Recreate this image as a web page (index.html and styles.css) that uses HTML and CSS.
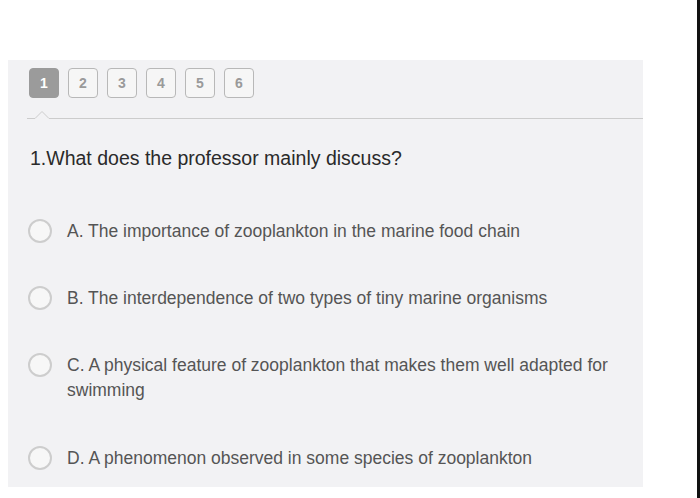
FILE: index.html
```html
<!DOCTYPE html>
<html>
<head>
<meta charset="utf-8">
<link rel="stylesheet" href="styles.css">
</head>
<body>
<div class="screen">
  <div class="main">
    <div class="panel">
      <div class="tabs">
        <span class="tab active">1</span>
        <span class="tab">2</span>
        <span class="tab">3</span>
        <span class="tab">4</span>
        <span class="tab">5</span>
        <span class="tab">6</span>
      </div>
      <div class="divider">
        <svg class="caret" width="26" height="10" viewBox="0 0 26 10"><path d="M0 9.5 H8 L15 2.5 L22 9.5 H26" fill="none" stroke="#cccccc" stroke-width="1"/></svg>
        <div class="line"></div>
      </div>
      <div class="question">1.What does the professor mainly discuss?</div>
      <ul class="options">
        <li class="option"><span class="radio"></span><span class="label">A. The importance of zooplankton in the marine food chain</span></li>
        <li class="option"><span class="radio"></span><span class="label">B. The interdependence of two types of tiny marine organisms</span></li>
        <li class="option"><span class="radio"></span><span class="label">C. A physical feature of zooplankton that makes them well adapted for swimming</span></li>
        <li class="option"><span class="radio"></span><span class="label">D. A phenomenon observed in some species of zooplankton</span></li>
      </ul>
    </div>
  </div>
  <div class="edge"></div>
</div>
</body>
</html>
```
FILE: styles.css
```css
html, body {
  margin: 0;
  padding: 0;
  background: #ffffff;
}
.screen {
  display: flex;
  width: 700px;
  height: 498px;
  overflow: hidden;
}
.main {
  flex: 1;
  padding: 60px 0 0 8px;
}
.edge {
  width: 3px;
  background: #111111;
}
.panel {
  width: 635px;
  height: 427px;
  background: #f2f2f4;
  box-sizing: border-box;
  padding-top: 8px;
  font-family: "Liberation Sans", Arial, sans-serif;
}
.tabs {
  display: flex;
  gap: 9px;
  padding-left: 21px;
}
.tab {
  width: 30px;
  height: 30px;
  box-sizing: border-box;
  border: 1px solid #b8b8b8;
  border-radius: 4px;
  display: flex;
  align-items: center;
  justify-content: center;
  font-size: 14px;
  font-weight: bold;
  color: #9a9a9a;
  background: #f6f6f6;
}
.tab.active {
  background: #9b9b9b;
  border-color: #9b9b9b;
  color: #ffffff;
}
.divider {
  display: flex;
  align-items: flex-end;
  margin-top: 11px;
  padding-left: 19px;
  height: 10px;
}
.caret {
  display: block;
  flex: none;
}
.line {
  flex: 1;
  height: 1px;
  background: #cccccc;
  margin-bottom: 0.5px;
}
.question {
  margin-top: 27px;
  padding-left: 22px;
  font-size: 19.5px;
  line-height: 24px;
  color: #2a2a2a;
}
.options {
  list-style: none;
  margin: 49px 0 0 0;
  padding: 0 0 0 20px;
  display: flex;
  flex-direction: column;
  gap: 42px;
}
.option {
  display: flex;
  align-items: flex-start;
  gap: 15px;
}
.option:last-child {
  margin-top: 1px;
}
.radio {
  flex: none;
  width: 24px;
  height: 24px;
  box-sizing: border-box;
  border: 2px solid #cdcdcd;
  border-radius: 50%;
  background: #f7f7f7;
}
.label {
  width: 560px;
  font-size: 17.5px;
  line-height: 25px;
  color: #555555;
}
```
